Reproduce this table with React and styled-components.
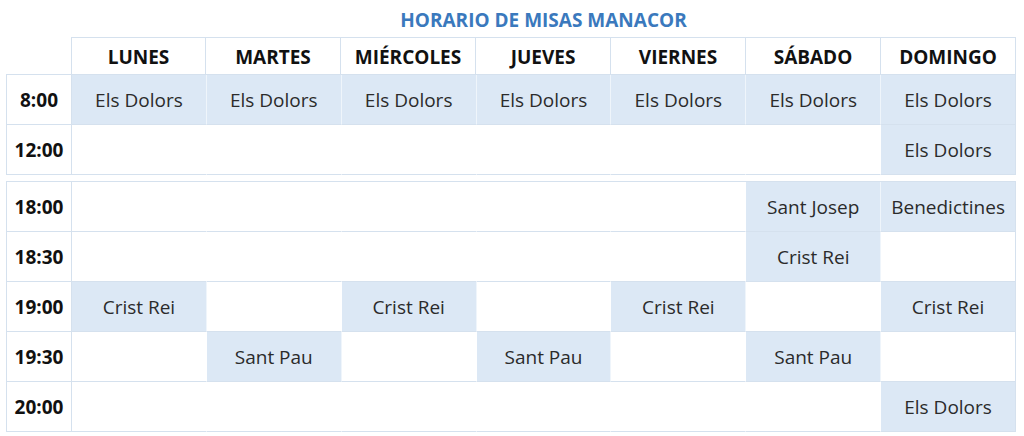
import React from "react";
import styled, { createGlobalStyle } from "styled-components";

const Global = createGlobalStyle`
  html, body { margin: 0; padding: 0; background: #fff; }
  body { font-family: "Open Sans", "Noto Sans", sans-serif; }
  * { box-sizing: border-box; }
`;

const LINE = "#d5e1ee";

const Page = styled.div`
  width: 1024px;
  height: 436px;
  padding: 0 8px 0 6px;
  display: flex;
  flex-direction: column;
`;

const TitleRow = styled.div`
  display: grid;
  grid-template-columns: 65px 1fr;
  height: 37px;
  align-items: center;
  padding-top: 3px;
`;

const Title = styled.h1`
  grid-column: 2;
  margin: 0;
  text-align: center;
  font-size: 19px;
  font-weight: 700;
  color: #3a79bd;
`;

const Grid = styled.div`
  display: grid;
  grid-template-columns: 65px repeat(7, 1fr);
`;

const HeaderRow = styled(Grid)`
  height: 37px;
`;

const Corner = styled.div``;

const HeadCell = styled.div`
  border-top: 1px solid ${LINE};
  border-right: 1px solid ${LINE};
  border-left: ${(p) => (p.$first ? `1px solid ${LINE}` : "none")};
  display: flex;
  align-items: center;
  justify-content: center;
  padding-top: 2px;
  font-size: 19px;
  font-weight: 700;
  color: #111;
`;

const Block = styled(Grid)`
  border-top: 1px solid ${LINE};
  border-left: 1px solid ${LINE};
  margin-top: ${(p) => (p.$gap ? "6px" : "0")};
`;

const Cell = styled.div`
  height: 50px;
  border-right: 1px solid ${(p) => (p.$last ? LINE : "rgba(255,255,255,0.55)")};
  border-bottom: 1px solid ${LINE};
  background: ${(p) => (p.$filled ? "#dce8f5" : "#fff")};
  display: flex;
  align-items: center;
  justify-content: center;
  padding-top: 1px;
  font-size: 19px;
  color: #2b2b2b;
  white-space: nowrap;
`;

const TimeCell = styled(Cell)`
  border-right: 1px solid ${LINE};
  font-weight: 700;
  color: #111;
`;

const days = ["LUNES", "MARTES", "MIÉRCOLES", "JUEVES", "VIERNES", "SÁBADO", "DOMINGO"];

const block1 = [
  ["8:00", ["Els Dolors", "Els Dolors", "Els Dolors", "Els Dolors", "Els Dolors", "Els Dolors", "Els Dolors"]],
  ["12:00", ["", "", "", "", "", "", "Els Dolors"]],
];

const block2 = [
  ["18:00", ["", "", "", "", "", "Sant Josep", "Benedictines"]],
  ["18:30", ["", "", "", "", "", "Crist Rei", ""]],
  ["19:00", ["Crist Rei", "", "Crist Rei", "", "Crist Rei", "", "Crist Rei"]],
  ["19:30", ["", "Sant Pau", "", "Sant Pau", "", "Sant Pau", ""]],
  ["20:00", ["", "", "", "", "", "", "Els Dolors"]],
];

function Rows({ rows }) {
  return rows.map(([time, cells]) => (
    <React.Fragment key={time}>
      <TimeCell>{time}</TimeCell>
      {cells.map((c, i) => (
        <Cell key={i} $filled={!!c} $last={i === cells.length - 1}>
          {c}
        </Cell>
      ))}
    </React.Fragment>
  ));
}

export default function App() {
  return (
    <>
      <Global />
      <Page>
        <TitleRow>
          <Title>HORARIO DE MISAS MANACOR</Title>
        </TitleRow>
        <HeaderRow>
          <Corner />
          {days.map((d, i) => (
            <HeadCell key={d} $first={i === 0}>
              {d}
            </HeadCell>
          ))}
        </HeaderRow>
        <Block>
          <Rows rows={block1} />
        </Block>
        <Block $gap>
          <Rows rows={block2} />
        </Block>
      </Page>
    </>
  );
}
